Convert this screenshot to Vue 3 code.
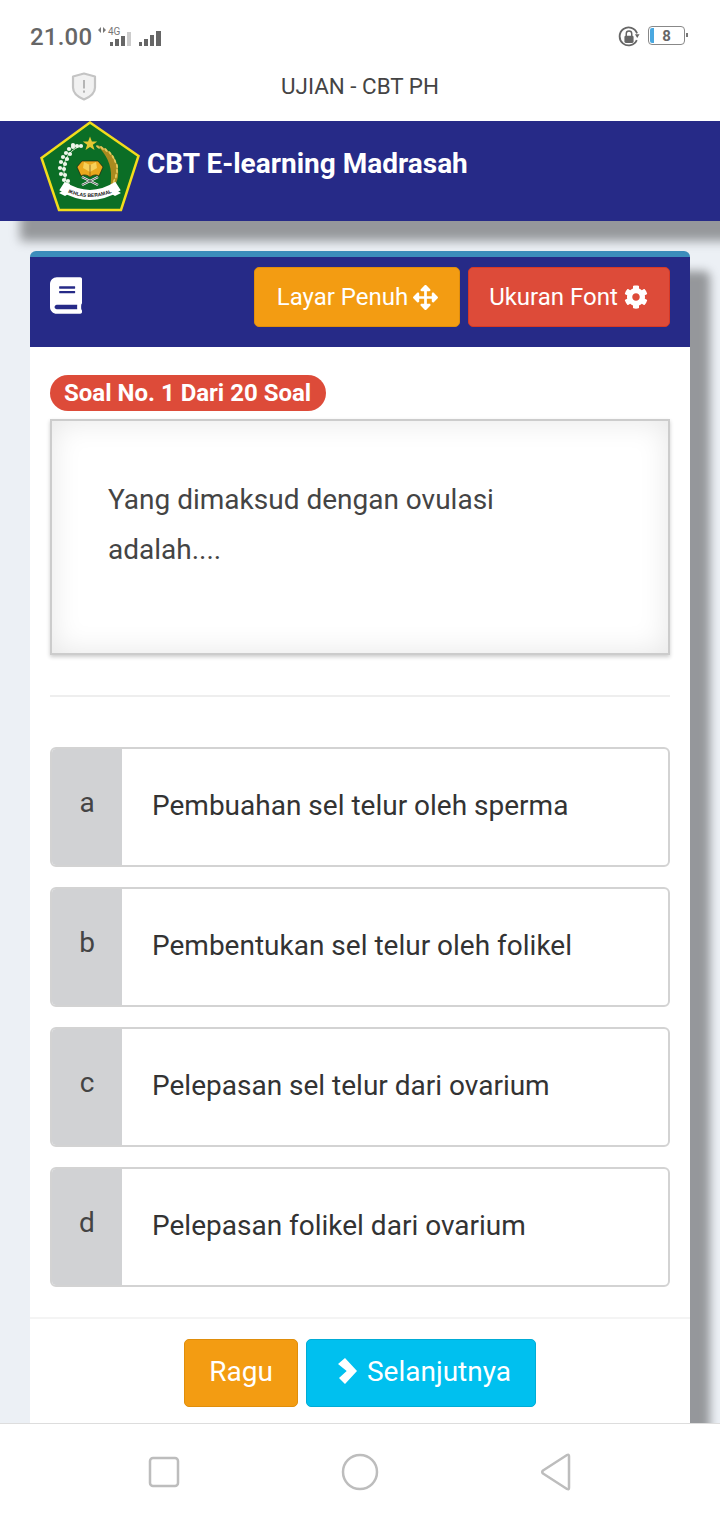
<script setup>
const options = [
  { key: 'a', text: 'Pembuahan sel telur oleh sperma' },
  { key: 'b', text: 'Pembentukan sel telur oleh folikel' },
  { key: 'c', text: 'Pelepasan sel telur dari ovarium' },
  { key: 'd', text: 'Pelepasan folikel dari ovarium' },
]
const leaves = [[37,25],[33,26],[29,28],[26,32],[30,33],[23,36],[27,38],[21,41],[25,43],[20,47],[24,48],[21,53],[25,54],[24,59],[28,60],[28,64],[33,24],[41,25]]
const grains = [[58,26,40],[62,27,45],[66,29,50],[70,32,55],[73,36,62],[75,40,70],[77,45,80],[77,50,88],[76,55,100],[74,60,110],[71,65,120]]
</script>

<template>
  <div class="page">
    <div class="status">
      <div class="status-left">
        <span class="time">21.00</span>
        <svg class="signal" width="66" height="22" viewBox="0 0 66 22">
          <path d="M4 1v6L1 4zM6 1v6l3-3z" fill="#777"/>
          <text x="11" y="9" class="net">4G</text>
          <g fill="#666">
            <rect x="13" y="16" width="3" height="4"/>
            <rect x="18" y="13" width="4" height="7"/>
            <rect x="24" y="10" width="4" height="10"/>
            <rect x="30" y="6" width="4" height="14" fill="#ccc"/>
            <rect x="42" y="16" width="3" height="4"/>
            <rect x="47" y="13" width="4" height="7"/>
            <rect x="53" y="9" width="4" height="11"/>
            <rect x="59" y="5" width="5" height="15"/>
          </g>
        </svg>
      </div>
      <div class="status-right">
        <svg width="22" height="22" viewBox="0 0 24 24">
          <path d="M20.500 15.500A9.800 9.800 0 1 1 20.800 8" fill="none" stroke="#666" stroke-width="2"/>
          <path d="M21 13l2.500-4h-5z" fill="#666"/>
          <rect x="7" y="10.500" width="10" height="8" rx="1.500" fill="#666"/>
          <path d="M9 11V8.500a3 3 0 0 1 6 0V11" fill="none" stroke="#666" stroke-width="1.600"/>
        </svg>
        <div class="battery">
          <span class="charge"></span>
          <span class="level">8</span>
          <span class="nub"></span>
        </div>
      </div>
    </div>

    <div class="titlebar">
      <svg class="shield" width="26" height="29" viewBox="0 0 26 29">
        <path d="M13 1.500l11 3v11c0 6-5 9.500-11 12-6-2.500-11-6-11-12v-11z" fill="#f1f1f1" stroke="#c4c4c4" stroke-width="2.200" stroke-linejoin="round"/>
        <rect x="12" y="8" width="2" height="8.500" fill="#b5b5b5"/>
        <rect x="12" y="18.500" width="2" height="2.200" fill="#b5b5b5"/>
      </svg>
      <span class="title">UJIAN - CBT PH</span>
    </div>

    <header class="app-header">
      <svg class="logo" width="100" height="92" viewBox="0 0 100 92">
        <path d="M50 1.500 98.500 35 81 89H19L1.500 37z" fill="#0b6e26" stroke="#f2dc1c" stroke-width="2.500"/>
        <path d="M50 15.500l1.900 5h5.300l-4.300 3.200 1.600 5.300-4.500-3.100-4.500 3.100 1.600-5.300-4.300-3.200h5.300z" fill="#e6c832"/>
        <path d="M41 25C26 30 18 46 29 66" fill="none" stroke="#cfe3c4" stroke-width="1"/>
        <g fill="#eef6ea">
          <circle v-for="(p, i) in leaves" :key="i" :cx="p[0]" :cy="p[1]" r="2.100"/>
        </g>
        <path d="M57 24C70 28 80 40 78 56c-1 5-3 9-6 11-2-2-1-6-1-10 1-13-5-24-14-33z" fill="#a98a1f"/>
        <g fill="#e4c65a">
          <ellipse v-for="(g, i) in grains" :key="i" :cx="g[0]" :cy="g[1]" rx="2.400" ry="1" :transform="`rotate(${g[2]} ${g[0]} ${g[1]})`"/>
        </g>
        <path d="M37 46l5-6h16l5 6-4 9c-3-2-6-1-9 1-3-2-6-3-9-1z" fill="#e9a81d" stroke="#111" stroke-width=".6"/>
        <path d="M44 41l6 3 6-3 1 6-7 4-7-4z" fill="#f6d05a"/>
        <path d="M50 44v12" stroke="#8b5a10" stroke-width=".8"/>
        <path d="M42 56l16 8M58 56 42 64" stroke="#fff" stroke-width="2.400"/>
        <path d="M42 56l16 8M58 56 42 64" stroke="#111" stroke-width=".7"/>
        <path d="M22 65Q50 83 78 65" fill="none" stroke="#fff" stroke-width="10"/>
        <path d="M19 72l9-5 2 5-5 3zM81 72l-9-5-2 5 5 3z" fill="#fff"/>
        <path id="ribbon-curve" d="M14 64Q50 88 86 64" fill="none"/>
        <text class="motto"><textPath href="#ribbon-curve" startOffset="50%" text-anchor="middle">IKHLAS BERAMAL</textPath></text>
      </svg>
      <span class="brand">CBT E-learning Madrasah</span>
    </header>

    <main class="content">
      <section class="card">
        <div class="card-head">
          <svg class="book" width="32" height="37" viewBox="0 0 448 512">
            <path fill="#fff" d="M448 360V24c0-13.300-10.700-24-24-24H96C43 0 0 43 0 96v320c0 53 43 96 96 96h328c13.300 0 24-10.700 24-24v-16c0-7.500-3.500-14.300-8.900-18.700-4.200-15.400-4.200-59.300 0-74.700 5.400-4.300 8.900-11.100 8.900-18.600zM128 134c0-3.300 2.700-6 6-6h212c3.300 0 6 2.700 6 6v20c0 3.300-2.700 6-6 6H134c-3.300 0-6-2.700-6-6v-20zm0 64c0-3.300 2.700-6 6-6h212c3.300 0 6 2.700 6 6v20c0 3.300-2.700 6-6 6H134c-3.300 0-6-2.700-6-6v-20zm253.400 250H96c-17.700 0-32-14.300-32-32 0-17.600 14.400-32 32-32h285.400c-1.900 17.100-1.900 46.900 0 64z"/>
          </svg>
          <div class="head-actions">
            <button class="btn fs">
              Layar Penuh
              <svg width="25" height="25" viewBox="0 0 512 512"><path fill="#fff" d="M352.201 425.775l-79.196 79.196c-9.373 9.373-24.568 9.373-33.941 0l-79.196-79.196c-15.119-15.119-4.411-40.971 16.971-40.970h51.162L228 284H127.196v51.162c0 21.382-25.851 32.090-40.971 16.971L7.029 272.937c-9.373-9.373-9.373-24.569 0-33.941L86.225 159.800c15.119-15.119 40.971-4.411 40.971 16.971V228H228V127.196h-51.230c-21.382 0-32.090-25.851-16.971-40.971l79.196-79.196c9.373-9.373 24.568-9.373 33.941 0l79.196 79.196c15.119 15.119 4.411 40.971-16.971 40.971h-51.162V228h100.804v-51.162c0-21.382 25.851-32.090 40.970-16.971l79.196 79.196c9.373 9.373 9.373 24.569 0 33.941L425.773 352.200c-15.119 15.119-40.971 4.411-40.970-16.971V284H284v100.804h51.230c21.382 0 32.090 25.851 16.971 40.971z"/></svg>
            </button>
            <button class="btn font">
              Ukuran Font
              <svg width="24" height="24" viewBox="0 0 512 512"><path fill="#fff" d="M487.400 315.700l-42.600-24.600c4.300-23.200 4.300-47 0-70.200l42.600-24.600c4.900-2.800 7.100-8.600 5.500-14-11.100-35.600-30-67.800-54.700-94.600-3.800-4.100-10-5.100-14.800-2.300L380.800 110c-17.900-15.400-38.500-27.300-60.800-35.100V25.800c0-5.600-3.900-10.500-9.400-11.700-36.700-8.200-74.300-7.800-109.200 0-5.500 1.200-9.400 6.100-9.400 11.700V75c-22.200 7.900-42.800 19.800-60.800 35.100L88.700 85.500c-4.900-2.800-11-1.900-14.800 2.300-24.700 26.700-43.600 58.900-54.700 94.600-1.700 5.400.6 11.200 5.500 14L67.300 221c-4.300 23.200-4.300 47 0 70.200l-42.600 24.600c-4.900 2.800-7.100 8.600-5.500 14 11.100 35.600 30 67.800 54.700 94.600 3.800 4.100 10 5.100 14.800 2.300l42.600-24.600c17.900 15.400 38.500 27.300 60.800 35.100v49.200c0 5.600 3.900 10.500 9.400 11.700 36.700 8.200 74.300 7.800 109.200 0 5.500-1.200 9.400-6.100 9.400-11.700v-49.200c22.200-7.900 42.800-19.800 60.800-35.100l42.600 24.600c4.900 2.800 11 1.900 14.800-2.300 24.700-26.700 43.600-58.900 54.700-94.600 1.500-5.500-.7-11.300-5.600-14.100zM256 336c-44.100 0-80-35.900-80-80s35.900-80 80-80 80 35.900 80 80-35.900 80-80 80z"/></svg>
            </button>
          </div>
        </div>

        <div class="card-body">
          <span class="pill">Soal No. 1 Dari 20 Soal</span>
          <div class="question">
            <p>Yang dimaksud dengan ovulasi adalah....</p>
          </div>
          <hr class="rule" />
          <div class="options">
            <div v-for="o in options" :key="o.key" class="option">
              <span class="opt-key">{{ o.key }}</span>
              <span class="opt-text">{{ o.text }}</span>
            </div>
          </div>
        </div>

        <div class="card-foot">
          <button class="btn ragu">Ragu</button>
          <button class="btn next">
            <svg width="20" height="26" viewBox="0 0 20 26"><path fill="#fff" d="M0 6 7 0 19 13 7 26 1 20 8.700 13z"/></svg>
            Selanjutnya
          </button>
        </div>
      </section>
    </main>

    <nav class="navbar">
      <svg width="32" height="32" viewBox="0 0 32 32"><rect x="2" y="2" width="28" height="28" rx="3" fill="none" stroke="#bdbdbd" stroke-width="2.500"/></svg>
      <svg width="38" height="38" viewBox="0 0 38 38"><circle cx="19" cy="19" r="17" fill="none" stroke="#bdbdbd" stroke-width="2.500"/></svg>
      <svg width="32" height="38" viewBox="0 0 32 38"><path d="M29 3v32q0 2-2 1L3 20.500q-1.500-1.500 0-3L27 2q2-1 2 1z" fill="none" stroke="#bdbdbd" stroke-width="2.500" stroke-linejoin="round"/></svg>
    </nav>
  </div>
</template>

<style scoped>
.page {
  width: 720px;
  height: 1520px;
  overflow: hidden;
  display: flex;
  flex-direction: column;
  background: #ecf0f5;
  font-family: Roboto, "Liberation Sans", sans-serif;
  color: #333;
}
.status {
  height: 66px;
  flex: none;
  background: #fff;
  display: flex;
  align-items: center;
  justify-content: space-between;
  padding: 8px 35px 0 30px;
  box-sizing: border-box;
}
.status-left, .status-right { display: flex; align-items: center; }
.status-left { gap: 5px; }
.status-right { gap: 8px; }
.time { font-size: 24px; font-weight: 500; color: #666; letter-spacing: .2px; }
.net { font: 400 10px Roboto, sans-serif; fill: #777; }
.battery {
  position: relative;
  width: 37px;
  height: 19px;
  margin-top: -3px;
  border: 1px solid #888;
  border-radius: 4px;
  box-sizing: border-box;
  display: flex;
  align-items: center;
  justify-content: center;
}
.charge {
  position: absolute;
  left: 1px;
  top: 1px;
  bottom: 1px;
  width: 4px;
  background: #4aa8e0;
  border-radius: 2px 0 0 2px;
}
.level { font-size: 15px; font-weight: 700; color: #666; }
.nub {
  position: absolute;
  right: -4px;
  top: 6px;
  width: 2px;
  height: 4px;
  background: #777;
}
.titlebar {
  height: 55px;
  flex: none;
  background: #fff;
  display: flex;
  align-items: center;
  justify-content: center;
  position: relative;
  padding-bottom: 18px;
  padding-top: 2px;
  box-sizing: border-box;
}
.shield { position: absolute; left: 71px; top: 6px; }
.title { font-size: 22.400px; color: #444; }
.app-header {
  height: 100px;
  flex: none;
  background: #262a87;
  display: flex;
  align-items: flex-start;
  padding-left: 40px;
  box-sizing: border-box;
  box-shadow: 20px 20px 10px rgba(0, 0, 0, .37);
  position: relative;
}
.logo { flex: none; margin-right: 7px; }
.motto { font: 700 5px "Liberation Sans", sans-serif; fill: #111; }
.brand {
  font-size: 28px;
  font-weight: 700;
  color: #fff;
  line-height: 86px;
}
.content { flex: 1; min-height: 0; padding: 30px 30px 0; }
.card {
  height: 100%;
  background: #fff;
  border-top: 6px solid #3c8dbc;
  border-radius: 6px 6px 0 0;
  box-shadow: 20px 20px 10px rgba(0, 0, 0, .37);
  box-sizing: border-box;
  display: flex;
  flex-direction: column;
}
.card-head {
  height: 90px;
  flex: none;
  background: #262a87;
  display: flex;
  align-items: flex-start;
  justify-content: space-between;
  padding: 10px 20px 0;
  box-sizing: border-box;
}
.book { margin-top: 10px; }
.head-actions { display: flex; gap: 8px; }
.btn {
  font-family: inherit;
  color: #fff;
  border: 1px solid transparent;
  border-radius: 5px;
  display: flex;
  align-items: center;
  justify-content: center;
  padding: 0;
  box-sizing: border-box;
}
.fs { width: 206px; height: 60px; background: #f39c12; border-color: #e08e0b; font-size: 24px; gap: 5px; padding-left: 1px; }
.font { width: 202px; height: 60px; background: #dd4b39; border-color: #d73925; font-size: 24px; gap: 6px; padding-right: 1px; }
.card-body { flex: 1; padding: 28px 20px 0; }
.pill {
  display: block;
  width: fit-content;
  background: #dd4b39;
  color: #fff;
  font-size: 24px;
  font-weight: 700;
  line-height: 36px;
  padding: 0 15px 0 14px;
  border-radius: 18px;
}
.question {
  margin-top: 8px;
  height: 236px;
  box-sizing: border-box;
  border: 2px solid #ccc;
  box-shadow: inset 0 0 30px rgba(0, 0, 0, .1), 0 2px 4px rgba(0, 0, 0, .2);
  padding: 54px 56px 0;
}
.question p {
  margin: 0;
  max-width: 460px;
  font-size: 28px;
  line-height: 50px;
  color: #444;
}
.rule { border: 0; border-top: 2px solid #eee; margin: 40px 0 50px; }
.options { display: flex; flex-direction: column; gap: 20px; }
.option {
  height: 120px;
  box-sizing: border-box;
  border: 2px solid #d3d3d3;
  border-radius: 6px;
  display: flex;
  overflow: hidden;
}
.opt-key {
  width: 70px;
  flex: none;
  background: #d1d2d4;
  font-size: 28px;
  text-align: center;
  line-height: 108px;
  color: #444;
}
.opt-text {
  padding-left: 30px;
  font-size: 28px;
  line-height: 114px;
  color: #333;
}
.card-foot {
  height: 106px;
  flex: none;
  border-top: 2px solid #f4f4f4;
  box-sizing: border-box;
  display: flex;
  justify-content: center;
  gap: 8px;
  padding-top: 20px;
}
.ragu { width: 114px; height: 68px; background: #f39c12; border-color: #e08e0b; font-size: 28px; padding-bottom: 4px; }
.next { width: 230px; height: 68px; background: #00c0ef; border-color: #00acd6; font-size: 28px; gap: 9px; padding: 0 0 4px 7px; }
.navbar {
  height: 97px;
  flex: none;
  background: #fff;
  border-top: 1px solid #ddd;
  box-sizing: border-box;
  display: flex;
  align-items: center;
  justify-content: space-between;
  padding: 0 148px;
  position: relative;
}
</style>
